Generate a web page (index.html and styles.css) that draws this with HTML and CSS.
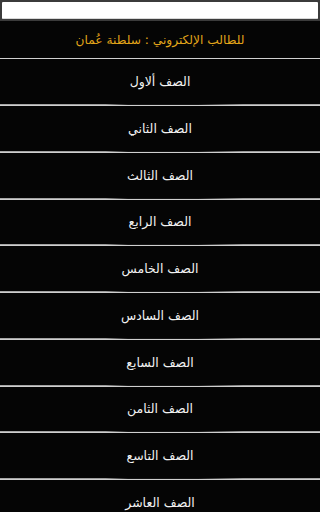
FILE: index.html
```html
<!DOCTYPE html>
<html lang="ar" dir="rtl">
<head>
<meta charset="utf-8">
<title>الطالب الإلكتروني</title>
<link rel="stylesheet" href="styles.css">
</head>
<body>
<div class="topbar"><div class="field"></div></div>
<div class="header">للطالب الإلكتروني : سلطنة عُمان</div>
<ul class="list">
  <li class="row">الصف ألاول</li>
  <li class="row">الصف الثاني</li>
  <li class="row">الصف الثالث</li>
  <li class="row">الصف الرابع</li>
  <li class="row">الصف الخامس</li>
  <li class="row">الصف السادس</li>
  <li class="row">الصف السابع</li>
  <li class="row">الصف الثامن</li>
  <li class="row">الصف التاسع</li>
  <li class="row">الصف العاشر</li>
</ul>
</body>
</html>
```
FILE: styles.css
```css
html, body {
  margin: 0;
  padding: 0;
  background: #050505;
  font-family: "DejaVu Sans", sans-serif;
  height: 512px;
  overflow: hidden;
}
.topbar {
  background: #3b3b3b;
  padding: 2px 2px 2px 2px;
  height: 17px;
}
.field {
  background: #ffffff;
  height: 17px;
  border-radius: 1px;
  border-bottom: 1px solid #d8d8d8;
  box-sizing: border-box;
}
.header {
  height: 38px;
  display: flex;
  align-items: center;
  justify-content: center;
  color: #e3a51a;
  font-size: 12.2px;
  border-bottom: 1px solid #d0d0d0;
  box-sizing: border-box;
  padding-top: 1px;
}
.list {
  list-style: none;
  margin: 0;
  padding: 0;
}
.row {
  height: 46.75px;
  box-sizing: border-box;
  display: flex;
  align-items: center;
  justify-content: center;
  color: #f2f2f2;
  font-size: 12.5px;
  position: relative;
  padding-bottom: 2px;
}
.row::after {
  content: "";
  position: absolute;
  left: 0;
  right: 0;
  bottom: 0;
  height: 2px;
  background:
    linear-gradient(to right, #a8a8a8 0%, #9a9a9a 33%, #151515 40%, #151515 62%, #9a9a9a 76%, #a8a8a8 100%) top / 100% 1px no-repeat,
    linear-gradient(#cfcfcf, #cfcfcf) bottom / 100% 1px no-repeat;
}
.row:first-child {
  height: 47px;
}
```
